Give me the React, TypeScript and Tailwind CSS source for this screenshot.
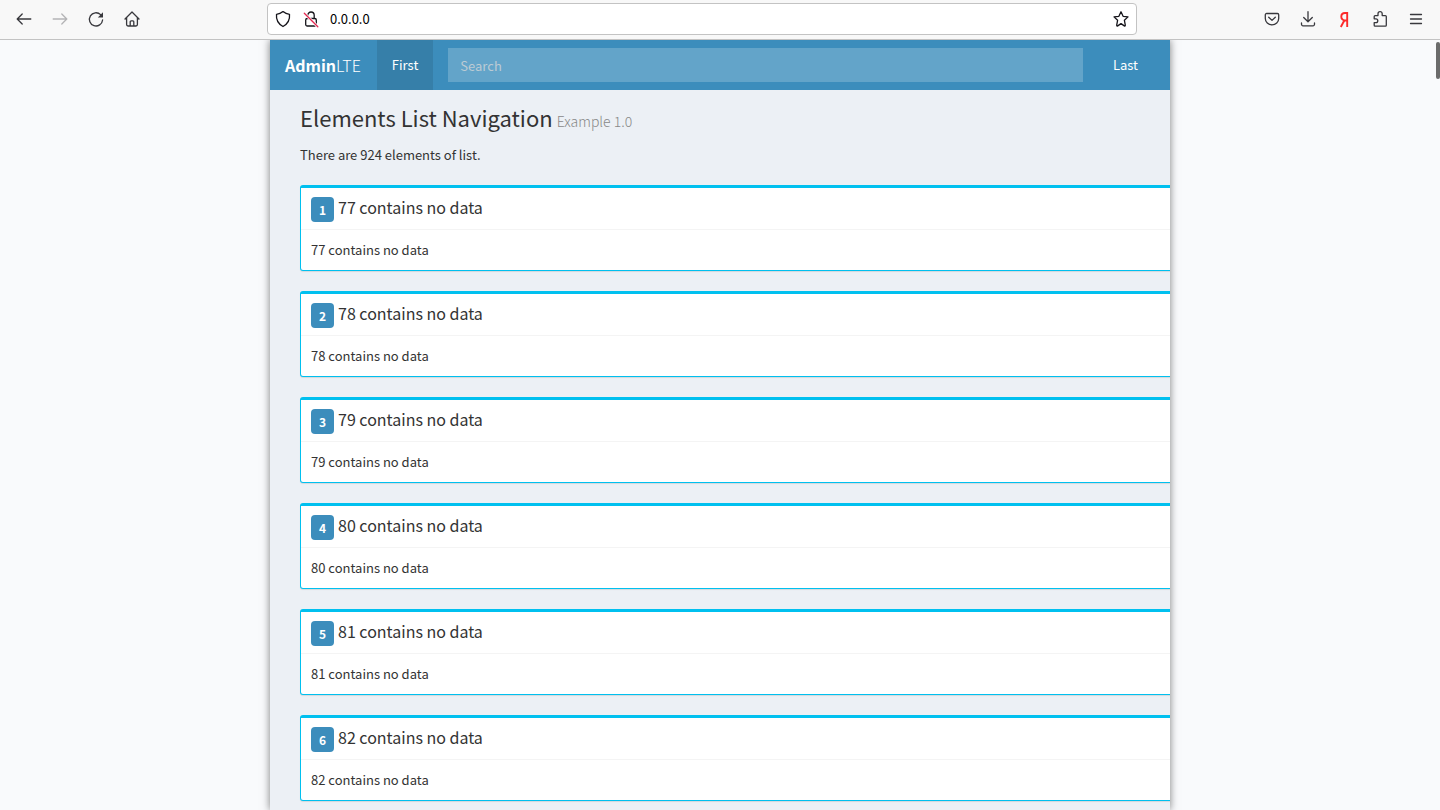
import type { ReactNode } from "react";

const items = [77, 78, 79, 80, 81, 82];

function Icon({ children, className = "" }: { children: ReactNode; className?: string }) {
  return (
    <svg
      viewBox="0 0 18 18"
      width="18"
      height="18"
      fill="none"
      stroke="currentColor"
      strokeWidth="1.3"
      strokeLinecap="round"
      strokeLinejoin="round"
      aria-hidden="true"
      className={className}
    >
      {children}
    </svg>
  );
}

function ToolbarButton({ label, children, disabled }: { label: string; children: ReactNode; disabled?: boolean }) {
  return (
    <button
      type="button"
      aria-label={label}
      disabled={disabled}
      className="flex h-8 w-9 items-center justify-center text-[#38383d] disabled:text-[#b4b4b6]"
    >
      {children}
    </button>
  );
}

function BrowserToolbar() {
  return (
    <header className="flex h-10 shrink-0 items-center border-b border-[#c3c3c3] bg-[#f8f8f8] px-1.5 pb-0.5">
      <nav aria-label="Browser" className="flex">
        <ToolbarButton label="Back">
          <Icon>
            <path d="M15.8 9H2.4M7.2 4L2.2 9l5 5" />
          </Icon>
        </ToolbarButton>
        <ToolbarButton label="Forward" disabled>
          <Icon>
            <path d="M2.2 9h13.4M10.8 4l5 5-5 5" />
          </Icon>
        </ToolbarButton>
        <ToolbarButton label="Reload">
          <Icon>
            <path d="M15.6 10a6.6 6.600 0 1 1-2-5.400" />
            <path d="M16 2.200v5.200h-5.200z" fill="currentColor" stroke="none" />
          </Icon>
        </ToolbarButton>
        <ToolbarButton label="Home">
          <Icon>
            <path d="M2 9l7-7 7 7M3.6 7.6v7a1.4 1.4 0 0 0 1.4 1.4h8a1.4 1.4 0 0 0 1.4-1.4v-7M7.2 15.8v-4a.9.9 0 0 1 .9-.9h1.8a.9.9 0 0 1 .9.9v4" />
          </Icon>
        </ToolbarButton>
      </nav>
      <div className="flex-1" />
      <div className="flex h-8 w-full max-w-[870px] items-center gap-2.5 rounded border border-[#c3c3c3] bg-white px-1.5">
        <Icon className="shrink-0 text-[#15141a]">
          <path d="M9 1.6c2 1.7 4.300 2.500 6.500 2.700.5 5-1.500 9.500-6.500 12.200C4 13.800 2 9.300 2.500 4.300 4.700 4.100 7 3.300 9 1.600z" />
        </Icon>
        <Icon className="shrink-0 text-[#15141a]">
          <rect x="3.700" y="8.500" width="10.600" height="7.500" rx="1.600" />
          <path d="M5.800 8.300V5.200a3.200 3.200 0 0 1 6.400 0v3.100" />
          <path d="M2.300 3.300l13.500 13.500" stroke="#fff" strokeWidth="2.800" />
          <path d="M2.300 3.300l13.500 13.500" stroke="#e22850" />
        </Icon>
        <input
          aria-label="Address"
          defaultValue="0.0.0.0"
          className="min-w-0 flex-1 bg-transparent text-[13px] leading-5 text-black outline-none"
        />
        <button type="button" aria-label="Bookmark this page" className="text-[#15141a]">
          <Icon>
            <path d="M9 1.800l2.100 4.500 4.900.6-3.600 3.400.9 4.900c.1.700-.4 1-1 .7L9 13.600l-3.300 2.300c-.6.300-1.100 0-1-.7l.9-4.900L2 6.900l4.900-.6z" />
          </Icon>
        </button>
      </div>
      <div className="flex-1" />
      <nav aria-label="Browser tools" className="flex">
        <ToolbarButton label="Save to Pocket">
          <Icon>
            <path d="M3.600 3.500h10.800a1.300 1.300 0 0 1 1.300 1.300V8.500a6.700 6.300 0 0 1-13.400 0V4.800a1.300 1.300 0 0 1 1.300-1.300zM5.700 7.200L9 10.400l3.300-3.200" />
          </Icon>
        </ToolbarButton>
        <ToolbarButton label="Downloads">
          <Icon>
            <path d="M9 1.700v9.800M4.700 7.500L9 11.800l4.300-4.300M2.500 13v1.300a1.500 1.500 0 0 0 1.500 1.500h10a1.500 1.500 0 0 0 1.500-1.500V13" />
          </Icon>
        </ToolbarButton>
        <ToolbarButton label="Yandex">
          <Icon className="text-[#fc2a2a]">
            <g strokeWidth="1.900" strokeLinecap="butt" strokeLinejoin="miter">
              <path d="M12.200 17V3H10C7.600 3 6.300 4.500 6.300 6.600c0 2.200 1.300 3.600 3.500 3.900h2.400" />
              <path d="M9.300 10.500L5.800 17" />
            </g>
          </Icon>
        </ToolbarButton>
        <ToolbarButton label="Extensions">
          <Icon>
            <path d="M3.200 12.600v2.700a.9.900 0 0 0 .9.900h10.300a.9.900 0 0 0 .9-.9V6.500a.9.900 0 0 0-.9-.9h-3.200V3.700a2.100 2.100 0 0 0-4.200 0v1.900H4.100a.9.900 0 0 0-.9.900v2.300h1.700a1.900 1.900 0 0 1 0 3.800z" />
          </Icon>
        </ToolbarButton>
        <ToolbarButton label="Menu">
          <Icon>
            <path d="M3.500 4.500h11M3.500 9h11M3.500 13.500h11" />
          </Icon>
        </ToolbarButton>
      </nav>
    </header>
  );
}

function Navbar() {
  return (
    <nav className="flex h-[50px] items-center bg-[#3c8dbc] text-[13px] text-white">
      <a href="#home" className="pl-[15px] pr-4 text-base">
        <b className="font-bold">Admin</b>
        <span className="font-light">LTE</span>
      </a>
      <a href="#first" className="flex h-full items-center bg-[#367fa9] px-[15px]">
        First
      </a>
      <input
        type="text"
        aria-label="Search"
        placeholder="Search"
        className="mx-[15px] h-[34px] min-w-0 flex-1 bg-[#63a4c9] px-3 text-white outline-none placeholder:text-[#bccbd4]"
      />
      <a href="#last" className="mr-[17px] flex h-full items-center px-[15px]">
        Last
      </a>
    </nav>
  );
}

function Card({ index, value }: { index: number; value: number }) {
  return (
    <article className="rounded-[3px] border border-t-[3px] border-[#00c0ef] bg-white shadow-[0_1px_1px_rgba(0,0,0,0.1)]">
      <div className="flex items-start gap-1 border-b border-[#f4f4f4] px-2.5 pb-[7px] pt-[9px]">
        <span className="flex h-[25px] w-[23px] items-center justify-center rounded bg-[#3c8dbc] text-xs font-bold text-white">
          {index}
        </span>
        <h2 className="text-base leading-5">{value} contains no data</h2>
      </div>
      <p className="p-2.5 text-[13px] leading-5">{value} contains no data</p>
    </article>
  );
}

export default function App() {
  return (
    <div className="relative flex h-screen flex-col overflow-hidden bg-[#f9fafc] font-['Noto_Sans_CJK_SC',sans-serif] text-[#333]">
      <BrowserToolbar />
      <div className="mx-auto flex min-h-0 w-full max-w-[900px] flex-1 flex-col bg-[#ecf0f5] shadow-[0_0_8px_rgba(0,0,0,0.5)] [clip-path:inset(0_-12px)]">
        <Navbar />
        <main className="min-h-0 flex-1 overflow-hidden pl-[30px]">
          <h1 className="flex items-baseline gap-1 pt-[11px] text-[22px] leading-8">
            Elements List Navigation
            <small className="text-[14px] font-light leading-5 text-[#888]">Example 1.0</small>
          </h1>
          <p className="pt-3 text-[13px] leading-5">There are 924 elements of list.</p>
          <section aria-label="Elements" className="-mr-8 flex flex-col gap-5 pt-5">
            {items.map((value, i) => (
              <Card key={value} index={i + 1} value={value} />
            ))}
          </section>
        </main>
      </div>
      <div className="absolute right-0 top-[42px] h-[37px] w-1 rounded-full bg-[#6b6b6b]" />
    </div>
  );
}
